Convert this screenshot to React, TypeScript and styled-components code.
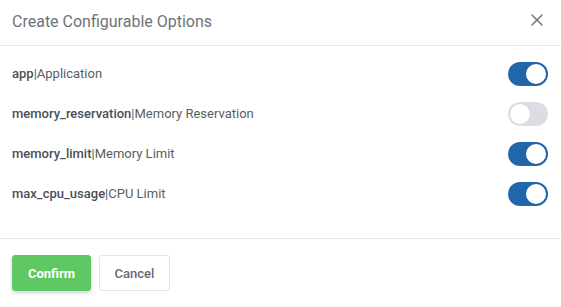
import React, { useState } from "react";
import styled, { createGlobalStyle } from "styled-components";

const Global = createGlobalStyle`
  html, body { margin: 0; padding: 0; background: #fff; }
  body { font-family: Roboto, "Liberation Sans", Arial, sans-serif; }
  * { box-sizing: border-box; }
`;

const Modal = styled.div`
  width: 561px;
  height: 307px;
  background: #fff;
  display: flex;
  flex-direction: column;
`;

const Header = styled.div`
  height: 47px;
  display: flex;
  align-items: center;
  justify-content: space-between;
  padding: 0 18px 0 12px;
  border-bottom: 1px solid #e9eaee;
`;

const Title = styled.h5`
  margin: 0;
  font-size: 16px;
  font-weight: 400;
  color: #6c737b;
  padding-bottom: 3px;
`;

const CloseButton = styled.button`
  border: none;
  background: transparent;
  padding: 0;
  width: 13px;
  height: 13px;
  display: flex;
  align-items: center;
  justify-content: center;
  cursor: pointer;
  margin-bottom: 5px;
`;

const Body = styled.div`
  padding: 8px 13px 24px 12px;
  display: flex;
  flex-direction: column;
  border-bottom: 1px solid #e9eaee;
`;

const Row = styled.div`
  height: 40px;
  display: flex;
  align-items: center;
  justify-content: space-between;
`;

const Label = styled.span`
  font-size: 13px;
  color: #595e63;
  padding-bottom: 2px;
`;

const Key = styled.b`
  font-weight: 500;
  color: #4a4f55;
`;

const Track = styled.button<{ $on: boolean }>`
  width: 40px;
  height: 24px;
  border-radius: 12px;
  border: none;
  padding: 2px;
  cursor: pointer;
  background: ${(p) => (p.$on ? "#2266aa" : "#dcdde4")};
  display: flex;
  justify-content: ${(p) => (p.$on ? "flex-end" : "flex-start")};
  align-items: center;
`;

const Knob = styled.span`
  width: 20px;
  height: 20px;
  border-radius: 50%;
  background: #fff;
  box-shadow: 0 0 1px rgba(0, 0, 0, 0.08);
`;

const Footer = styled.div`
  padding: 16px 12px;
  display: flex;
  gap: 8px;
`;

const Btn = styled.button<{ $primary?: boolean }>`
  height: 36px;
  width: ${(p) => (p.$primary ? "79px" : "71px")};
  padding: 0;
  border-radius: 3px;
  font-family: inherit;
  font-size: 13px;
  cursor: pointer;
  font-weight: ${(p) => (p.$primary ? 700 : 500)};
  color: ${(p) => (p.$primary ? "#fff" : "#656b73")};
  background: ${(p) => (p.$primary ? "#5fc862" : "#fff")};
  border: 1px solid ${(p) => (p.$primary ? "#5fc862" : "#e3e5e8")};
  box-shadow: ${(p) => (p.$primary ? "0 2px 4px rgba(0,0,0,0.18)" : "none")};
`;

const options = [
  { key: "app", label: "Application", on: true },
  { key: "memory_reservation", label: "Memory Reservation", on: false },
  { key: "memory_limit", label: "Memory Limit", on: true },
  { key: "max_cpu_usage", label: "CPU Limit", on: true },
];

export default function App() {
  const [state, setState] = useState(options.map((o) => o.on));
  return (
    <>
      <Global />
      <Modal>
        <Header>
          <Title>Create Configurable Options</Title>
          <CloseButton aria-label="Close">
            <svg width="12" height="12" viewBox="0 0 12 12">
              <path d="M1 1L11 11M11 1L1 11" stroke="#737a82" strokeWidth="1.6" strokeLinecap="round" />
            </svg>
          </CloseButton>
        </Header>
        <Body>
          {options.map((o, i) => (
            <Row key={o.key}>
              <Label>
                <Key>{o.key}</Key>|{o.label}
              </Label>
              <Track
                $on={state[i]}
                onClick={() => setState((s) => s.map((v, j) => (j === i ? !v : v)))}
              >
                <Knob />
              </Track>
            </Row>
          ))}
        </Body>
        <Footer>
          <Btn $primary>Confirm</Btn>
          <Btn>Cancel</Btn>
        </Footer>
      </Modal>
    </>
  );
}
